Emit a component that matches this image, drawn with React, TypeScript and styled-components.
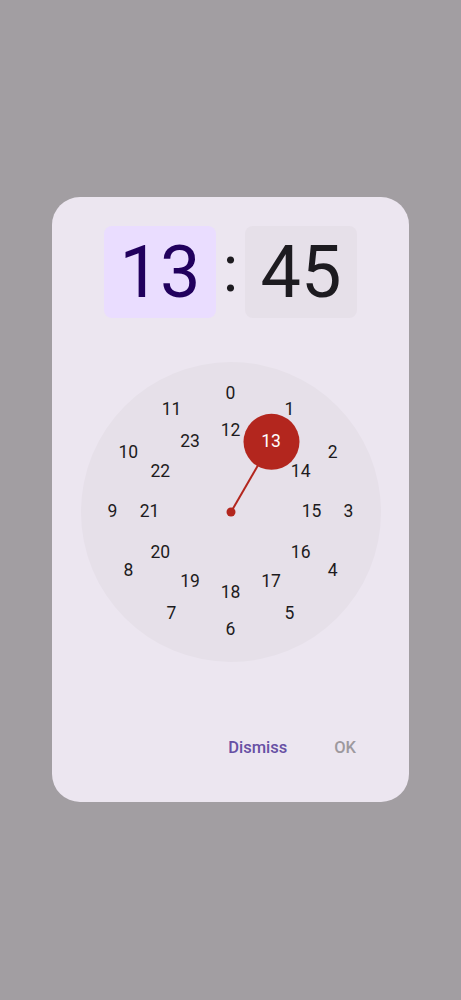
import React from "react";
import styled, { createGlobalStyle } from "styled-components";

const GlobalStyle = createGlobalStyle`
  html, body {
    margin: 0;
    padding: 0;
    background: #a29ea2;
    font-family: Roboto, "Noto Sans", sans-serif;
  }
`;

const Screen = styled.div`
  width: 461px;
  height: 1000px;
  background: #a29ea2;
  display: flex;
  justify-content: center;
  padding-top: 197px;
  box-sizing: border-box;
`;

const Dialog = styled.div`
  width: 357px;
  height: 605px;
  background: #ece6f0;
  border-radius: 28px;
  display: flex;
  flex-direction: column;
  align-items: center;
  padding-top: 29px;
  box-sizing: border-box;
`;

const TimeRow = styled.div`
  display: flex;
  align-items: center;
`;

const TimeBox = styled.div<{ $active?: boolean }>`
  width: 112px;
  height: 92px;
  border-radius: 8px;
  display: flex;
  align-items: center;
  justify-content: center;
  font-size: 72px;
  font-weight: 400;
  background: ${(p) => (p.$active ? "#eaddff" : "#e6e0e9")};
  color: ${(p) => (p.$active ? "#21005d" : "#1d1b20")};
`;

const Colon = styled.div`
  width: 29px;
  text-align: center;
  font-size: 64px;
  line-height: 92px;
  color: #1d1b20;
  margin-top: -4px;
`;

const Face = styled.div`
  position: relative;
  width: 300px;
  height: 300px;
  border-radius: 50%;
  background: #e6e0e9;
  margin-top: 44px;
`;

const Hand = styled.svg`
  position: absolute;
  left: 0;
  top: 0;
`;

const Num = styled.div<{ $selected?: boolean }>`
  position: absolute;
  transform: translate(-50%, -50%);
  font-size: 17.5px;
  line-height: 1;
  color: ${(p) => (p.$selected ? "#ffffff" : "#1d1b20")};
`;

const Actions = styled.div`
  align-self: stretch;
  display: flex;
  justify-content: flex-end;
  gap: 47px;
  padding: 0 53px 0 0;
  margin-top: 76px;
`;

const TextButton = styled.button<{ $disabled?: boolean }>`
  border: none;
  background: none;
  padding: 0;
  font-family: Roboto, sans-serif;
  font-size: 16.5px;
  font-weight: 500;
  color: ${(p) => (p.$disabled ? "#9d999e" : "#6750a4")};
  cursor: pointer;
`;

const C = 150;

const pos = (i: number, r: number) => {
  const a = ((i % 12) / 12) * Math.PI * 2;
  return { left: C + r * Math.sin(a), top: C - r * Math.cos(a) };
};

export default function App() {
  const selected = 13;
  const sel = pos(selected, 81);
  return (
    <>
      <GlobalStyle />
      <Screen>
        <Dialog>
          <TimeRow>
            <TimeBox $active>13</TimeBox>
            <Colon>:</Colon>
            <TimeBox>45</TimeBox>
          </TimeRow>
          <Face>
            <Hand width={300} height={300}>
              <line x1={C} y1={C} x2={sel.left} y2={sel.top} stroke="#b3261e" strokeWidth={2} />
              <circle cx={C} cy={C} r={4.5} fill="#b3261e" />
              <circle cx={sel.left} cy={sel.top} r={28} fill="#b3261e" />
            </Hand>
            {Array.from({ length: 24 }, (_, h) => {
              const p = pos(h, h < 12 ? 118 : 81);
              return (
                <Num key={h} $selected={h === selected} style={{ left: p.left, top: p.top }}>
                  {h}
                </Num>
              );
            })}
          </Face>
          <Actions>
            <TextButton>Dismiss</TextButton>
            <TextButton $disabled>OK</TextButton>
          </Actions>
        </Dialog>
      </Screen>
    </>
  );
}
